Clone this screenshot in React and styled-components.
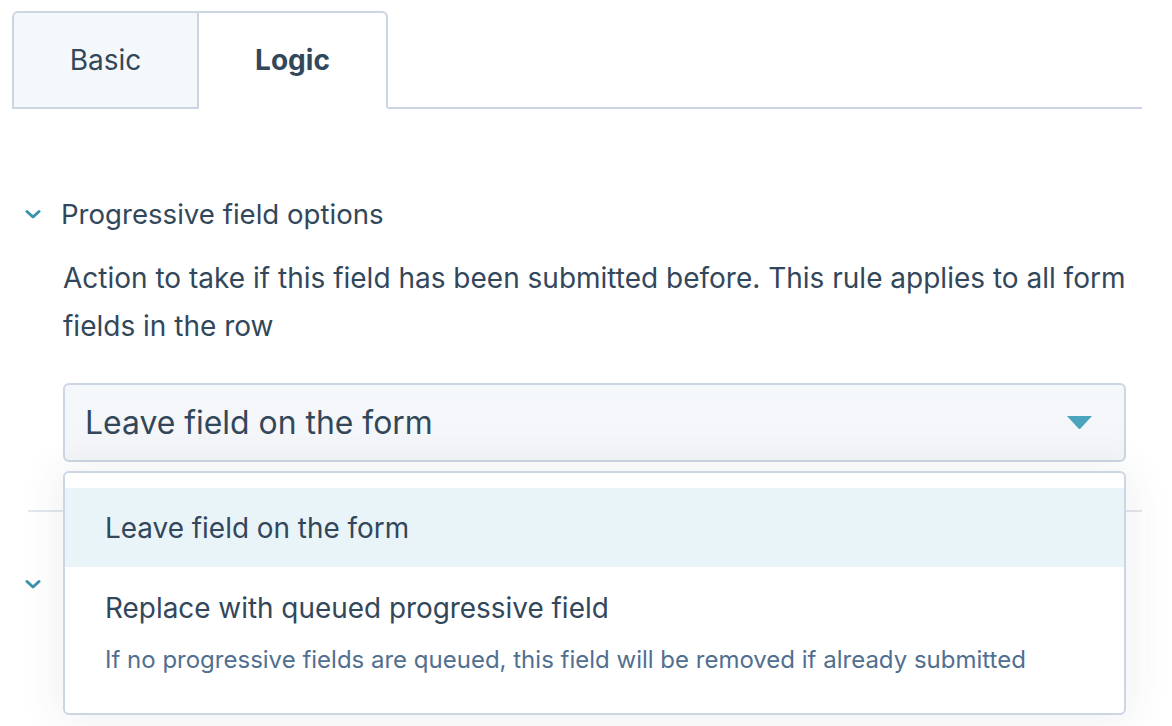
import React from "react";
import styled, { createGlobalStyle } from "styled-components";

const GlobalStyle = createGlobalStyle`
  html, body { margin: 0; padding: 0; background: #ffffff; }
  body {
    font-family: Inter, "Noto Sans", sans-serif;
    color: #33475b;
    -webkit-font-smoothing: antialiased;
  }
  * { box-sizing: border-box; }
`;

const Page = styled.div`
  width: 1172px;
  height: 726px;
  overflow: hidden;
  padding: 11px 30px 0 12px;
`;

const TabBar = styled.div`
  display: flex;
  align-items: stretch;
  height: 98px;
`;

const Tab = styled.div`
  display: flex;
  align-items: center;
  justify-content: center;
  width: ${(p) => p.$w}px;
  font-size: 28px;
  font-weight: ${(p) => (p.$active ? 700 : 400)};
  color: #33475b;
  background: ${(p) => (p.$active ? "#ffffff" : "#f5f8fa")};
  border: 2px solid #cbd6e2;
  border-bottom: ${(p) => (p.$active ? "2px solid transparent" : "2px solid #cbd6e2")};
  border-left-width: ${(p) => (p.$first ? 2 : 0)}px;
  border-radius: ${(p) => (p.$first ? "6px 0 0 0" : "0 6px 0 0")};
`;

const TabFill = styled.div`
  flex: 1;
  border-bottom: 2px solid #cbd6e2;
`;

const Body = styled.div`
  position: relative;
  padding-top: 85px;
`;

const Section = styled.div`
  margin-left: 16px;
  border-bottom: ${(p) => (p.$divided ? "2px solid #e3e8ee" : "none")};
  padding-bottom: ${(p) => (p.$divided ? 48 : 0)}px;
`;

const SectionHeader = styled.div`
  display: flex;
  align-items: center;
  height: 40px;
  gap: 20px;
  font-size: 27.6px;
  color: #33475b;
  margin-top: ${(p) => p.$mt || 0}px;
`;

const Chevron = styled.svg`
  width: 16px;
  height: 11px;
  flex: none;
  margin-left: -3px;
`;

const Content = styled.div`
  padding-left: 35px;
`;

const Description = styled.p`
  margin: 20px 0 0;
  font-size: 28px;
  line-height: 48px;
  color: #33475b;
  width: 1080px;
`;

const SelectWrap = styled.div`
  position: relative;
  margin-top: 33px;
  width: 1063px;
`;

const Select = styled.div`
  display: flex;
  align-items: center;
  justify-content: space-between;
  height: 79px;
  padding: 0 32px 0 20px;
  background: linear-gradient(#f5f8fa, #f3f5f8);
  border: 2px solid #cbd6e2;
  border-radius: 6px;
  font-size: 31.9px;
  color: #33475b;
`;

const Caret = styled.svg`
  width: 25px;
  height: 13px;
  flex: none;
`;

const Menu = styled.div`
  position: absolute;
  top: 88px;
  left: 0;
  right: 0;
  z-index: 2;
  background: #ffffff;
  border: 2px solid #cbd6e2;
  border-radius: 6px;
  padding: 15px 0 16px;
  box-shadow: 0 2px 40px 6px rgba(45, 62, 80, 0.07);
`;

const Option = styled.div`
  display: flex;
  flex-direction: column;
  justify-content: center;
  padding: ${(p) => (p.$tall ? "23px 40px 22px" : "0 40px")};
  height: ${(p) => (p.$tall ? "auto" : "79px")};
  background: ${(p) => (p.$selected ? "#e9f4f9" : "#ffffff")};
`;

const OptionLabel = styled.div`
  font-size: 27.9px;
  line-height: 36px;
  color: #33475b;
`;

const OptionHelp = styled.div`
  margin-top: 19px;
  font-size: 24px;
  line-height: 30px;
  color: #516f90;
`;

const ChevronIcon = () => (
  <Chevron viewBox="0 0 16 11">
    <path d="M2 2.5 L8 8 L14 2.5" fill="none" stroke="#3a93ad" strokeWidth="3" strokeLinecap="round" strokeLinejoin="round" />
  </Chevron>
);

export default function App() {
  return (
    <>
      <GlobalStyle />
      <Page>
        <TabBar>
          <Tab $w={187} $first>Basic</Tab>
          <Tab $w={189} $active>Logic</Tab>
          <TabFill />
        </TabBar>
        <Body>
          <Section $divided>
            <SectionHeader>
              <ChevronIcon />
              <span>Progressive field options</span>
            </SectionHeader>
            <Content>
              <Description>
                Action to take if this field has been submitted before. This rule applies to all form fields in the row
              </Description>
              <SelectWrap>
                <Select>
                  <span>Leave field on the form</span>
                  <Caret viewBox="0 0 25 13">
                    <path d="M0 0 H25 L13.5 12.5 Q12.5 13.5 11.5 12.5 Z" fill="#4aa4be" />
                  </Caret>
                </Select>
                <Menu>
                  <Option $selected>
                    <OptionLabel>Leave field on the form</OptionLabel>
                  </Option>
                  <Option $tall>
                    <OptionLabel>Replace with queued progressive field</OptionLabel>
                    <OptionHelp>If no progressive fields are queued, this field will be removed if already submitted</OptionHelp>
                  </Option>
                </Menu>
              </SelectWrap>
            </Content>
          </Section>
          <Section>
            <SectionHeader $mt={52}>
              <ChevronIcon />
            </SectionHeader>
          </Section>
        </Body>
      </Page>
    </>
  );
}
